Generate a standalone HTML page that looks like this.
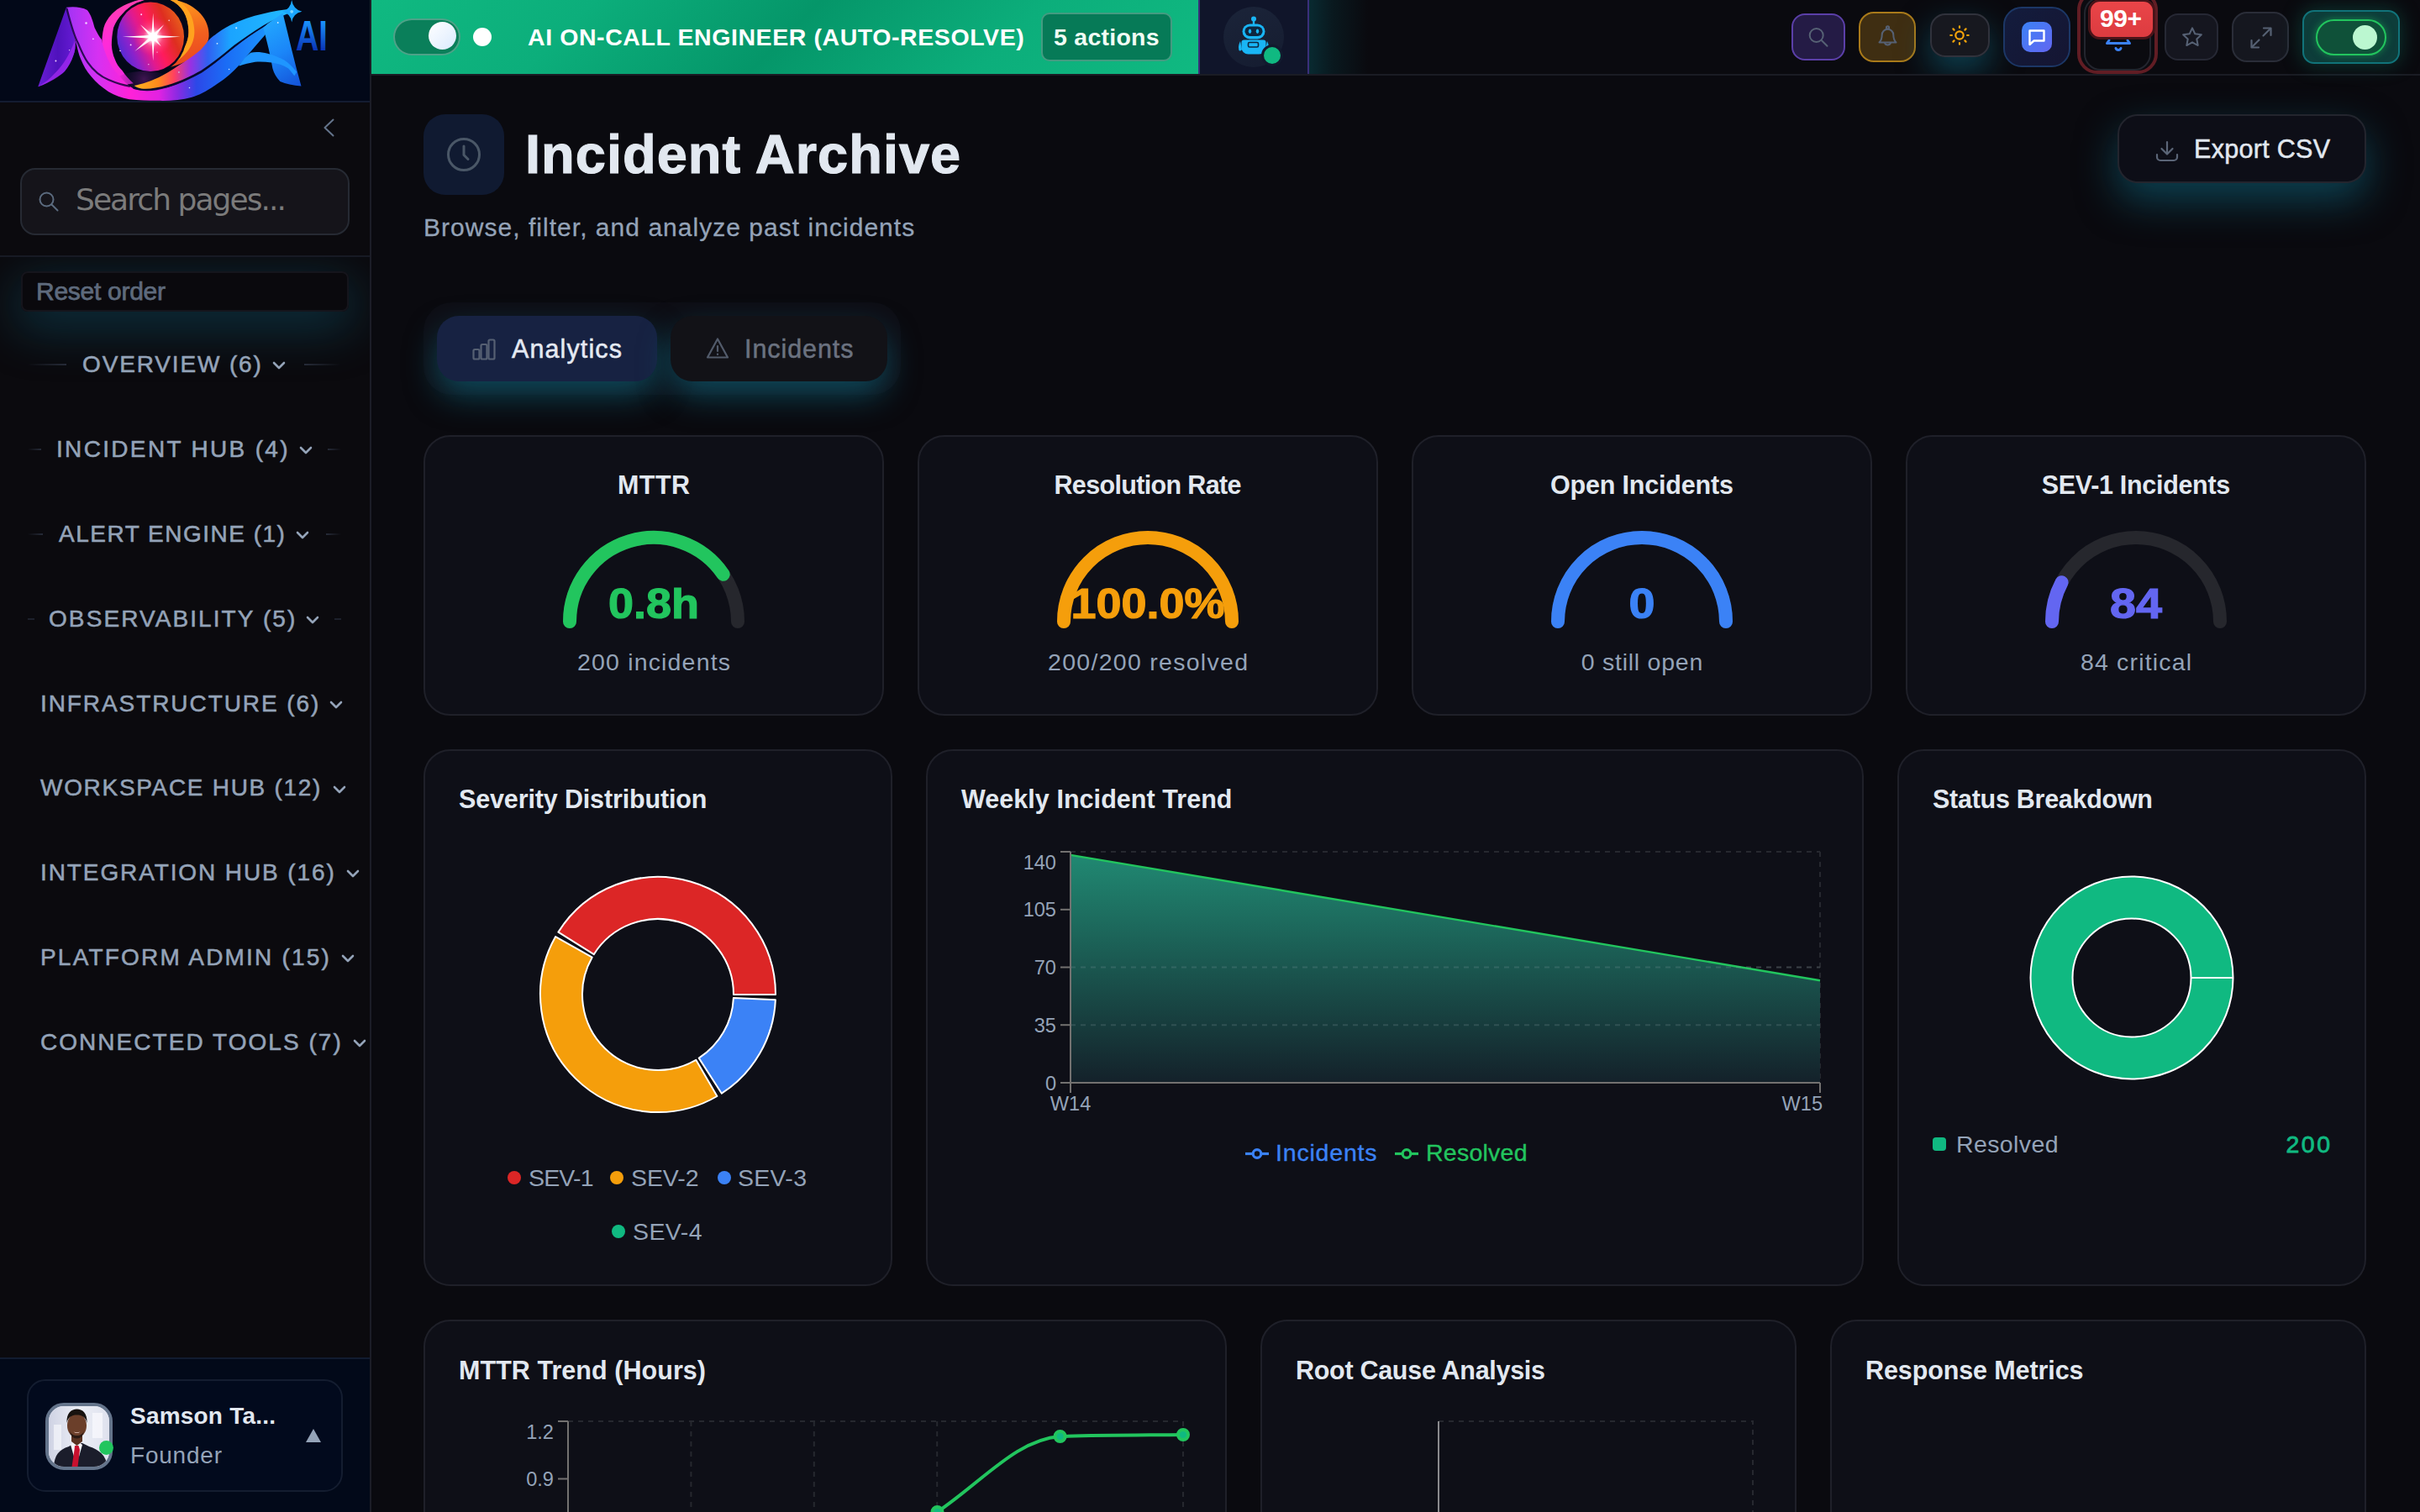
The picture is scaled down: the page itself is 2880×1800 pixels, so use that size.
<!DOCTYPE html>
<html lang="en">
<head>
<meta charset="utf-8">
<title>Incident Archive</title>
<style>
*{box-sizing:border-box;margin:0;padding:0}
html,body{width:2880px;height:1800px;overflow:hidden;background:#0a0a0f}
body{font-family:"Liberation Sans",sans-serif;color:#e2e8f0;position:relative}
.abs{position:absolute}
.t{position:absolute;white-space:nowrap;line-height:1}
svg{display:block;overflow:visible}
/* sidebar */
#sidebar{position:absolute;left:0;top:0;width:442px;height:1800px;background:#0b0a0e;border-right:2px solid #1c1d27}
#logo{position:absolute;left:0;top:0;width:440px;height:122px;background:#020818;border-bottom:2px solid #141c31;overflow:hidden}
#search{position:absolute;left:24px;top:200px;width:392px;height:80px;border:2px solid #262a33;border-radius:18px;background:#15141a}
#sep1{position:absolute;left:0;top:304px;width:440px;height:2px;background:#171a24}
#navglow{position:absolute;left:0;top:306px;width:440px;height:220px;overflow:hidden}
#navglow i{position:absolute;left:25px;top:17px;width:390px;height:48px;border-radius:8px;box-shadow:0 16px 56px 6px rgba(14,100,128,.4)}
#reset{position:absolute;left:25px;top:323px;width:390px;height:48px;border:2px solid #15151c;border-radius:8px;background:#0a090d}
.nav{position:absolute;left:0;width:440px;height:40px}
.nav .t{font-size:28px;font-weight:400;color:#94a3b8;-webkit-text-stroke:.55px #94a3b8;letter-spacing:2.9px;top:6px}
.nav .hr{position:absolute;top:19px;height:2px}
#userwrap{position:absolute;left:0;top:1616px;width:440px;height:184px;background:#020919;border-top:2px solid #121c30}
#usercard{position:absolute;left:32px;top:24px;width:376px;height:134px;border:2px solid #141d30;border-radius:22px;background:#020a1d}
/* topbar */
#topbar{position:absolute;left:442px;top:0;width:2438px;height:90px;border-bottom:2px solid #1a1c24;background:#0a0a0f}
#banner{position:absolute;left:0;top:0;width:984px;height:88px;background:linear-gradient(135deg,#10b981 0%,#0cae7b 25%,#059669 50%,#0cae7b 75%,#10b981 100%)}
#robot{position:absolute;left:984px;top:0;width:132px;height:88px;background:#10152a;border-left:2px solid #3a2f7a;border-right:2px solid #3a2f7a}
.ib{position:absolute;border-style:solid;border-width:2px}
/* main */
.card{position:absolute;background:#0e0f17;border:2px solid #1f2029;border-radius:32px}
.ct{font-size:30px;font-weight:700;color:#e2e8f0}
.sub{font-size:28px;color:#94a3b8}
.ax{font-size:23.600px;fill:#94a3b8;font-family:"Liberation Sans",sans-serif}
</style>
</head>
<body>
<aside id="sidebar">
  <div id="logo"><svg class="abs" style="left:30px;top:0" width="380" height="125" viewBox="0 0 2420 796">
<defs>
<linearGradient id="lgN" x1="95" y1="0" x2="400" y2="0" gradientUnits="userSpaceOnUse"><stop offset="0" stop-color="#6a1ed6"/><stop offset=".5" stop-color="#4f12bc"/><stop offset="1" stop-color="#6a1cd8"/></linearGradient>
<linearGradient id="lgA1" x1="315" y1="0" x2="1900" y2="0" gradientUnits="userSpaceOnUse"><stop offset="0" stop-color="#a233f5"/><stop offset=".15" stop-color="#d631f2"/><stop offset=".3" stop-color="#ff22d8"/><stop offset=".44" stop-color="#e222e2"/><stop offset=".53" stop-color="#8a2ae2"/><stop offset=".62" stop-color="#2c48e8"/><stop offset=".76" stop-color="#1b6cf5"/><stop offset="1" stop-color="#1b9cff"/></linearGradient>
<linearGradient id="lgB" x1="826" y1="0" x2="2040" y2="0" gradientUnits="userSpaceOnUse"><stop offset="0" stop-color="#ffb422"/><stop offset=".15" stop-color="#ff8a1c"/><stop offset=".25" stop-color="#ff4060"/><stop offset=".35" stop-color="#9a30e2"/><stop offset=".46" stop-color="#3060f2"/><stop offset=".6" stop-color="#1ba4ff"/><stop offset="1" stop-color="#22bbff"/></linearGradient>
<linearGradient id="lgAr" x1="1800" y1="150" x2="2090" y2="650" gradientUnits="userSpaceOnUse"><stop offset="0" stop-color="#22aaff"/><stop offset=".5" stop-color="#1b86f8"/><stop offset="1" stop-color="#1452d8"/></linearGradient>
<linearGradient id="lgAI" x1="0" y1="155" x2="0" y2="385" gradientUnits="userSpaceOnUse"><stop offset="0" stop-color="#1b96ff"/><stop offset="1" stop-color="#0a32b4"/></linearGradient>
<linearGradient id="lgRing" x1="0" y1="0" x2="0" y2="650" gradientUnits="userSpaceOnUse"><stop offset="0" stop-color="#ff3fae"/><stop offset=".5" stop-color="#ff2bd8"/><stop offset="1" stop-color="#f02be0"/></linearGradient>
<linearGradient id="lgOr" x1="1150" y1="0" x2="1200" y2="520" gradientUnits="userSpaceOnUse"><stop offset="0" stop-color="#ff9a1c"/><stop offset=".5" stop-color="#f2601f"/><stop offset="1" stop-color="#e8451f"/></linearGradient>
<linearGradient id="lgOrb" x1="700" y1="440" x2="1210" y2="210" gradientUnits="userSpaceOnUse"><stop offset="0" stop-color="#3f2fd8"/><stop offset=".22" stop-color="#8a22cc"/><stop offset=".42" stop-color="#e01a90"/><stop offset=".58" stop-color="#ff1b5c"/><stop offset=".8" stop-color="#de2e20"/><stop offset="1" stop-color="#e8601c"/></linearGradient>
<radialGradient id="rgGlow" cx="969" cy="279" r="150" gradientUnits="userSpaceOnUse"><stop offset="0" stop-color="#fff"/><stop offset=".22" stop-color="#ffe9f0" stop-opacity=".95"/><stop offset=".5" stop-color="#ff6aa0" stop-opacity=".55"/><stop offset="1" stop-color="#ff2a70" stop-opacity="0"/></radialGradient>
<radialGradient id="rgDk" cx="900" cy="600" r="200" gradientUnits="userSpaceOnUse"><stop offset="0" stop-color="#5a1a6a" stop-opacity=".7"/><stop offset="1" stop-color="#1a0a3a" stop-opacity="0"/></radialGradient>
</defs>
<!-- left ring (magenta) -->
<path d="M860 0 C780 20 700 60 658 105 C625 140 605 175 595 210 C585 255 580 300 582 342 C585 380 590 415 600 447 C612 490 632 525 658 553 C690 590 725 620 763 642 L821 632 C790 605 760 575 737 537 C710 510 690 480 679 447 C665 415 657 380 655 342 C655 300 660 255 669 210 C685 170 705 135 737 105 C780 60 830 30 905 0 Z" fill="url(#lgRing)"/>
<!-- orange right crescent -->
<path d="M1140 0 C1300 35 1400 150 1392 275 C1384 385 1255 475 1028 528 C1170 450 1245 340 1238 225 C1232 115 1190 45 1100 0 Z" fill="url(#lgOr)"/>
<path d="M1100 0 C1190 45 1232 115 1238 225 C1245 340 1170 450 1028 528 C1215 455 1290 340 1282 225 C1275 120 1230 45 1150 0 Z" fill="#ffa21e"/>
<!-- orb -->
<ellipse cx="950" cy="279" rx="270" ry="279" fill="#07061c"/><ellipse cx="950" cy="279" rx="254" ry="263" fill="url(#lgOrb)"/>
<circle cx="969" cy="279" r="150" fill="url(#rgGlow)"/>
<g fill="#fff"><path d="M737 279 L969 266 L1176 279 L969 292 Z"/><path d="M969 100 L980 279 L969 460 L958 279 Z"/><path d="M872 186 L978 270 L1030 352 L958 290 Z" opacity=".9"/><path d="M1052 186 L978 290 L830 388 L958 268 Z" opacity=".9"/><circle cx="969" cy="279" r="34"/></g>
<g fill="#ffd9ff"><circle cx="880" cy="110" r="6"/><circle cx="1090" cy="155" r="5"/><circle cx="800" cy="340" r="6"/><circle cx="720" cy="385" r="5"/><circle cx="1000" cy="395" r="4"/><circle cx="935" cy="488" r="4"/></g>
<ellipse cx="900" cy="610" rx="210" ry="70" fill="url(#rgDk)"/>
<!-- N left leg -->
<path d="M97 658 L311 58 L318 70 C345 150 368 240 379 316 C382 355 378 390 365 420 C350 465 328 505 300 540 C280 560 260 572 237 585 C195 615 150 640 97 658 Z" fill="url(#lgN)"/>
<path d="M379 316 C382 355 378 390 365 420 C350 465 328 505 300 540 C265 575 190 625 97 658 C150 625 190 595 215 565 C275 510 320 440 350 370 C362 345 370 325 375 305 Z" fill="#a62af2" opacity=".75"/>
<!-- band 1: N diagonal + bottom swoosh + A left leg -->
<path d="M312 56 C360 48 430 52 470 76 C500 110 515 170 526 210 C545 250 560 275 579 300 C600 400 640 500 700 560 C740 610 780 650 826 675 C900 690 1000 680 1079 662 C1180 630 1260 590 1332 552 C1430 490 1510 420 1584 360 C1660 300 1730 250 1805 205 L1900 130 L1955 100 L1880 190 C1790 300 1700 400 1622 494 C1570 550 1520 595 1458 633 C1380 690 1320 720 1263 737 C1180 760 1090 766 1000 763 C930 762 860 760 790 753 C730 740 680 722 632 695 C580 660 535 625 500 579 C465 540 440 495 421 447 C405 410 398 375 390 342 C360 250 335 150 312 56 Z" fill="url(#lgA1)"/>
<path d="M316 68 C350 200 380 290 400 326 C430 400 450 440 474 474 C520 540 570 580 632 605 C690 630 740 645 790 653" fill="none" stroke="#14043a" stroke-width="14" stroke-linecap="round" opacity=".85"/>
<!-- dark separator -->
<path d="M826 668 C900 690 1000 680 1079 655 C1180 625 1260 585 1332 545 C1430 480 1510 410 1584 350 C1660 290 1730 240 1805 195 L2030 88" fill="none" stroke="#050a30" stroke-width="16" stroke-linecap="round" opacity=".9"/>
<!-- band 2: orange -> blue upper -->
<path d="M826 650 C880 640 960 615 1041 572 C1100 540 1150 505 1205 470 C1250 440 1290 410 1332 375 C1355 350 1375 325 1395 300 C1445 255 1500 218 1553 191 C1640 150 1720 120 1800 105 C1880 85 1960 72 2040 66 L2044 86 C1960 110 1880 150 1805 192 C1730 237 1660 287 1584 342 C1510 402 1430 472 1332 535 C1260 575 1180 615 1079 645 C1000 668 930 678 880 672 C855 668 838 660 826 650 Z" fill="url(#lgB)"/>
<!-- A right leg + crossbar -->
<path d="M1837 180 L1952 98 C2000 290 2040 470 2092 652 C2030 650 1975 635 1932 618 C1905 590 1885 555 1875 519 C1860 420 1830 310 1805 210 Z" fill="url(#lgAr)"/>
<path d="M1622 494 C1650 450 1680 420 1710 399 C1752 392 1795 396 1837 406 C1885 418 1925 435 1963 456 C2000 480 2030 512 2058 545 L2040 575 C2025 555 2010 535 1995 519 C1955 495 1910 480 1868 475 C1825 468 1782 466 1742 469 C1700 476 1660 486 1622 500 Z" fill="#1f96ff"/>
<!-- sparkle -->
<path d="M2020 0 Q2030 70 2098 88 Q2030 102 2020 168 Q2010 102 1948 88 Q2010 72 2020 0 Z" fill="#1ba6ff"/>
<circle cx="2020" cy="88" r="12" fill="#7fd6ff"/>
<g fill="#cfe9ff"><circle cx="1600" cy="212" r="7"/><circle cx="1455" cy="330" r="6"/><circle cx="1915" cy="172" r="6"/><circle cx="1245" cy="665" r="5"/><circle cx="1545" cy="525" r="5"/><circle cx="1165" cy="548" r="5"/></g>
<g fill="#f3d2ff"><circle cx="462" cy="175" r="8"/><circle cx="515" cy="295" r="6"/><circle cx="232" cy="462" r="6"/><circle cx="335" cy="380" r="4"/></g>
<text x="2050" y="385" font-family="'Liberation Sans',sans-serif" font-weight="700" font-size="322" textLength="242" lengthAdjust="spacingAndGlyphs" fill="#1466e0" style="fill:url(#lgAI)">AI</text>
</svg></div>
  <svg class="abs" style="left:382px;top:139px" width="20" height="26" viewBox="0 0 20 26"><path d="M14.500 3.500 L4.500 13 L14.500 22.500" fill="none" stroke="#64748b" stroke-width="2" stroke-linecap="round" stroke-linejoin="round"/></svg>
  <div id="search">
    <svg class="abs" style="left:19px;top:24px" width="30" height="30" viewBox="0 0 30 30"><circle cx="10.500" cy="11.500" r="8" fill="none" stroke="#5b6b7f" stroke-width="2"/><path d="M16.500 17.500 L23.500 24.500" stroke="#5b6b7f" stroke-width="2" stroke-linecap="round"/></svg>
    <span class="t" id="t_search" style="left:64px;top:18px;font-size:36px;color:#7b7b7b;font-family:'DejaVu Sans','Liberation Sans',sans-serif;letter-spacing:-1.94px">Search pages...</span>
  </div>
  <div id="sep1"></div>
  <div id="navglow"><i></i></div>
  <div id="reset"><span class="t" id="t_reset" style="left:16px;top:7px;font-size:30px;font-weight:400;-webkit-text-stroke:.75px #5e6a7c;color:#5e6a7c;letter-spacing:-0.28px">Reset order</span></div>
  <nav>
    <div class="nav" style="top:414px"><i class="hr" style="left:33px;width:46px;background:linear-gradient(90deg,rgba(40,46,60,0),#262b38)"></i><span class="t" id="n1" style="left:98px;letter-spacing:1.86px">OVERVIEW (6)</span><i class="hr" style="left:362px;width:43px;background:linear-gradient(270deg,rgba(40,46,60,0),#262b38)"></i></div>
    <div class="nav" style="top:515px"><i class="hr" style="left:33px;width:16px;background:linear-gradient(90deg,rgba(40,46,60,0),#262b38)"></i><span class="t" id="n2" style="left:67px;letter-spacing:2.33px">INCIDENT HUB (4)</span><i class="hr" style="left:390px;width:16px;background:linear-gradient(270deg,rgba(40,46,60,0),#262b38)"></i></div>
    <div class="nav" style="top:616px"><i class="hr" style="left:33px;width:18px;background:linear-gradient(90deg,rgba(40,46,60,0),#262b38)"></i><span class="t" id="n3" style="left:70px;letter-spacing:1.50px">ALERT ENGINE (1)</span><i class="hr" style="left:388px;width:18px;background:linear-gradient(270deg,rgba(40,46,60,0),#262b38)"></i></div>
    <div class="nav" style="top:717px"><i class="hr" style="left:33px;width:8px;background:#1d212c"></i><span class="t" id="n4" style="left:58px;letter-spacing:2.09px">OBSERVABILITY (5)</span><i class="hr" style="left:398px;width:8px;background:#1d212c"></i></div>
    <div class="nav" style="top:818px"><span class="t" id="n5" style="left:48px;letter-spacing:1.92px">INFRASTRUCTURE (6)</span></div>
    <div class="nav" style="top:918px"><span class="t" id="n6" style="left:48px;letter-spacing:1.70px">WORKSPACE HUB (12)</span></div>
    <div class="nav" style="top:1019px"><span class="t" id="n7" style="left:48px;letter-spacing:1.90px">INTEGRATION HUB (16)</span></div>
    <div class="nav" style="top:1120px"><span class="t" id="n8" style="left:48px;letter-spacing:2.19px">PLATFORM ADMIN (15)</span></div>
    <div class="nav" style="top:1221px"><span class="t" id="n9" style="left:48px;letter-spacing:2.04px">CONNECTED TOOLS (7)</span></div>
  </nav>
  <svg class="abs" style="left:0;top:0" width="440" height="1300" viewBox="0 0 440 1300" fill="none" stroke="#94a3b8" stroke-width="2.6" stroke-linecap="round" stroke-linejoin="round">
    <path d="M326 432 l6 6 l6 -6"/><path d="M358 533 l6 6 l6 -6"/><path d="M354 634 l6 6 l6 -6"/><path d="M366 735 l6 6 l6 -6"/><path d="M394 836 l6 6 l6 -6"/><path d="M398 937 l6 6 l6 -6"/><path d="M414 1037 l6 6 l6 -6"/><path d="M408 1138 l6 6 l6 -6"/><path d="M422 1239 l6 6 l6 -6"/>
  </svg>
  <div id="userwrap">
    <div id="usercard">
      <div class="abs" id="avatar" style="left:20px;top:26px;width:80px;height:80px;border:4px solid #64748b;border-radius:22px;overflow:hidden;background:#dfe3ee"><svg width="72" height="72" viewBox="0 0 72 72"><defs><linearGradient id="avbg" x1="0" y1="0" x2="1" y2="0"><stop offset="0" stop-color="#cfd3e4"/><stop offset=".5" stop-color="#eceef6"/><stop offset="1" stop-color="#dfe2ee"/></linearGradient></defs><rect width="72" height="72" fill="url(#avbg)"/><rect x="6" y="22" width="9" height="30" fill="#f5f6fb" opacity=".7"/><rect x="52" y="8" width="12" height="30" fill="#f7f8fc" opacity=".8"/><path d="M6 72 C7 58 12 52 24 48 L30 44 L40 44 L48 48 C60 52 68 58 70 72 Z" fill="#1b1d2b"/><path d="M26 46 L33 40 L40 46 L36 60 L30 60 Z" fill="#f4f4f8"/><path d="M31 47 L35.500 47 L37 52 L34.500 72 L27.500 72 L30.500 52 Z" fill="#c8102e"/><path d="M27 30 h13 v12 l-6.500 5 l-6.500 -5 z" fill="#5a3322"/><ellipse cx="33.500" cy="23" rx="11.500" ry="14.500" fill="#6b3f2a"/><path d="M21.500 20 C21 8 27 3.500 33.500 3.500 C40 3.500 46 8 45.500 20 C44 13 40 10.500 33.500 10.500 C27 10.500 23 13 21.500 20 Z" fill="#17120f"/><path d="M25 29 C27 37 40 37 42 29 C41 35.500 38 38.500 33.500 38.500 C29 38.500 26 35.500 25 29 Z" fill="#2a1a14"/><path d="M29.500 30.500 Q33.500 33.500 37.500 30.500 Q33.500 32 29.500 30.500Z" fill="#e9c9c0"/></svg></div>
      <i class="abs" style="left:84px;top:71px;width:17px;height:17px;border-radius:50%;background:#22c55e"></i>
      <span class="t" id="t_name" style="left:121px;top:28px;font-size:28px;font-weight:700;color:#e2e8f0;letter-spacing:0.21px">Samson Ta...</span>
      <span class="t" id="t_role" style="left:121px;top:75px;font-size:28px;color:#94a3b8;letter-spacing:0.78px">Founder</span>
      <svg class="abs" style="left:329px;top:56px" width="20" height="18" viewBox="0 0 20 18"><path d="M10 1 L19 17 L1 17 Z" fill="#94a3b8"/></svg>
    </div>
  </div>
</aside>
<header id="topbar">
  <div id="banner">
    <div class="abs" style="left:26px;top:22px;width:80px;height:44px;border-radius:22px;background:#0a7f5a;border:2px solid rgba(255,255,255,.28)"></div>
    <i class="abs" style="left:68px;top:26px;width:33px;height:33px;border-radius:50%;background:linear-gradient(135deg,#ffffff,#dbeafe)"></i>
    <i class="abs" style="left:121px;top:33px;width:22px;height:22px;border-radius:50%;background:#fff"></i>
    <span class="t" id="t_banner" style="left:186px;top:30px;font-size:28.5px;font-weight:700;color:#fff;letter-spacing:0.58px">AI ON-CALL ENGINEER (AUTO-RESOLVE)</span>
    <div class="abs" style="left:797px;top:15px;width:156px;height:58px;border-radius:10px;background:#067a57;border:2px solid rgba(255,255,255,.25)"><span class="t" id="t_actions" style="left:13px;top:13px;font-size:28.5px;font-weight:700;color:#f0fdf4;letter-spacing:0.26px">5 actions</span></div>
  </div>
  <div class="abs" style="left:1116px;top:0;width:70px;height:88px;background:linear-gradient(90deg,rgba(8,62,70,.62),rgba(8,58,66,.3) 40%,rgba(8,58,66,0) 100%)"></div>
  <div id="robot">
    <i class="abs" style="left:28px;top:8px;width:72px;height:72px;border-radius:50%;background:linear-gradient(160deg,#1b2439,#151c30)"></i>
    <svg class="abs" style="left:43px;top:19px" width="46" height="48" viewBox="0 0 46 48">
      <g fill="#19b5f5"><circle cx="21" cy="3.5" r="3"/><rect x="19.8" y="4" width="2.4" height="7"/>
      <rect x="7.5" y="9.5" width="27" height="18" rx="9"/>
      <path d="M9.5 28.5 h23 a3 3 0 0 1 3 3 v6 a8 8 0 0 1 -8 8 h-13 a8 8 0 0 1 -8 -8 v-6 a3 3 0 0 1 3 -3z"/>
      <path d="M5 30 q-3 6 -1.500 11 q2.500 1.500 3.500 -1.500 z"/><path d="M37 30 q3 6 1.500 11 q-2.500 1.500 -3.500 -1.500 z"/></g>
      <rect x="10.500" y="12.500" width="21" height="11.500" rx="5.700" fill="#0d2740"/>
      <ellipse cx="16.500" cy="18.200" rx="1.700" ry="2.800" fill="#19b5f5"/><ellipse cx="25.500" cy="18.200" rx="1.700" ry="2.800" fill="#19b5f5"/>
      <rect x="14.500" y="31.500" width="12" height="5.500" rx="1.500" fill="none" stroke="#0d2740" stroke-width="1.600"/>
    </svg>
    <i class="abs" style="left:76px;top:56px;width:20px;height:20px;border-radius:50%;background:#10b981;box-shadow:0 0 0 3px #121a2e"></i>
  </div>
  <!-- right icon buttons (positions relative to topbar left=442) -->
  <div class="ib" style="left:1690px;top:16px;width:64px;height:56px;border-radius:16px;border-color:#5b3fa8;background:#241b45">
    <svg class="abs" style="left:17px;top:13px" width="28" height="28" viewBox="0 0 28 28" fill="none" stroke="#566174" stroke-width="2" stroke-linecap="round"><circle cx="10.700" cy="11" r="8"/><path d="M16.700 17 L23.500 23.800"/></svg>
  </div>
  <div class="ib" style="left:1770px;top:14px;width:68px;height:60px;border-radius:18px;border-color:#a97a1a;background:#3f2e12">
    <svg class="abs" style="left:19px;top:13px" width="28" height="32" viewBox="0 0 28 32" fill="none" stroke="#566174" stroke-width="2" stroke-linecap="round" stroke-linejoin="round"><path d="M3.500 21.500 c2.500 -2.500 3.200 -5 3.200 -9 a6.800 6.800 0 0 1 13.600 0 c0 4 .7 6.500 3.200 9 z"/><path d="M10 22 a3.700 3.700 0 0 0 7 0"/><circle cx="13.500" cy="3.800" r="1.600"/></svg>
  </div>
  <div class="abs" style="left:1700px;top:0;width:400px;height:88px;overflow:hidden"><i class="abs" style="left:155px;top:16px;width:71px;height:52px;border-radius:18px;box-shadow:0 16px 38px 0 rgba(14,112,136,.55)"></i></div>
  <div class="ib" style="left:1855px;top:16px;width:71px;height:52px;border-radius:18px;border-color:#30323c;background:#17181f">
    <svg class="abs" style="left:20px;top:11px" width="26" height="26" viewBox="0 0 26 26" fill="none" stroke="#f5a30b" stroke-width="2.200" stroke-linecap="round"><circle cx="13" cy="13" r="4.700"/><path d="M13 2.300v1.600M13 22.100v1.600M2.300 13h1.600M22.100 13h1.600M5.400 5.400l1.200 1.200M19.400 19.400l1.200 1.200M5.400 20.600l1.200-1.200M19.400 6.600l1.200-1.200"/></svg>
  </div>
  <div class="ib" style="left:1942px;top:8px;width:80px;height:72px;border-radius:22px;border-color:#1c3766;background:linear-gradient(135deg,#131c3d,#151532)">
    <div class="abs" style="left:20px;top:16px;width:36px;height:36px;border-radius:10px;background:linear-gradient(135deg,#3b82f6,#6366f1)">
      <svg class="abs" style="left:7px;top:8px" width="22" height="22" viewBox="0 0 22 22" fill="none" stroke="#fff" stroke-width="2.400" stroke-linejoin="round"><path d="M2.500 2.500 h17 v12 h-12 l-5 4.500 z"/></svg>
    </div>
  </div>
  <div class="abs" style="left:2030px;top:-12px;width:96px;height:100px;border-radius:24px;border:4px solid #611d24;background:#0b0b10"></div>
  <div class="ib" style="left:2038px;top:-4px;width:80px;height:88px;border-radius:20px;border-color:#23252e;background:#0b0b10">
    <svg class="abs" style="left:22px;top:36px" width="34" height="30" viewBox="0 0 34 30" fill="none" stroke="#3b82f6" stroke-width="3" stroke-linecap="round" stroke-linejoin="round"><path d="M6 14 l-2.500 3.500 h27 l-2.500 -3.500"/><path d="M14 23.500 a3.200 3.200 0 0 0 6 0"/></svg>
  </div>
  <div class="abs" style="left:2043px;top:-1px;width:80px;height:48px;border-radius:14px;background:linear-gradient(180deg,#ea4548,#dc3b40);border:3px solid #4a1419"><span class="t" id="t_99" style="left:11px;top:5px;font-size:30px;font-weight:700;color:#fff;letter-spacing:-0.45px">99+</span></div>
  <div class="ib" style="left:2134px;top:16px;width:64px;height:56px;border-radius:16px;border-color:#262834;background:#15161f">
    <svg class="abs" style="left:18px;top:13px" width="26" height="26" viewBox="0 0 28 28" fill="none" stroke="#566174" stroke-width="2.200" stroke-linejoin="round"><path d="M14 2.500 l3.500 7.500 l8.200 1 l-6 5.700 l1.500 8.100 l-7.200 -4 l-7.200 4 l1.500 -8.100 l-6 -5.700 l8.200 -1 z"/></svg>
  </div>
  <div class="ib" style="left:2214px;top:14px;width:68px;height:60px;border-radius:18px;border-color:#2a2d38;background:#15171f">
    <svg class="abs" style="left:19px;top:15px" width="28" height="28" viewBox="0 0 28 28" fill="none" stroke="#566173" stroke-width="2.200" stroke-linecap="round" stroke-linejoin="round"><path d="M17 2.500 h8.500 v8.500"/><path d="M25 3 l-8.500 8.500"/><path d="M11 25.500 h-8.500 v-8.500"/><path d="M3 25 l8.500 -8.500"/></svg>
  </div>
  <div class="ib" style="left:2298px;top:12px;width:116px;height:64px;border-radius:14px;border-color:#11737a;background:#0d3d3a;box-shadow:0 0 24px rgba(16,150,120,.35)">
    <div class="abs" style="left:14px;top:9px;width:84px;height:43px;border-radius:22px;border:2.500px solid #22c55e;background:#0f5139;box-shadow:0 0 10px rgba(34,197,94,.5)"></div>
    <i class="abs" style="left:58px;top:16px;width:29px;height:29px;border-radius:50%;background:#bbf7d0"></i>
  </div>
</header>
<main id="main">
  <div class="abs" style="left:504px;top:136px;width:96px;height:96px;border-radius:26px;background:#101a31">
    <svg class="abs" style="left:26px;top:26px" width="44" height="44" viewBox="0 0 44 44" fill="none" stroke="#4a5767" stroke-width="3" stroke-linecap="round" stroke-linejoin="round"><circle cx="22" cy="22" r="18.500"/><path d="M22 12 v10.500 l5 5"/></svg>
  </div>
  <h1 class="t" id="t_title" style="left:625px;top:151px;font-size:65px;font-weight:700;color:#e2e8f0;-webkit-text-stroke:1.1px #e2e8f0;letter-spacing:1.00px">Incident Archive</h1>
  <p class="t" id="t_subtitle" style="left:504px;top:256px;font-size:30px;color:#94a3b8;-webkit-text-stroke:.3px #94a3b8;letter-spacing:1.03px">Browse, filter, and analyze past incidents</p>
  <div class="abs" id="export" style="left:2520px;top:136px;width:296px;height:82px;border-radius:24px;border:2px solid #23252e;background:#0d0e17;box-shadow:0 20px 48px 0 rgba(14,112,136,.55)">
    <svg class="abs" style="left:43px;top:29px" width="28" height="26" viewBox="0 0 28 26" fill="none" stroke="#5b6577" stroke-width="2.200" stroke-linecap="round" stroke-linejoin="round"><path d="M14 2 v14"/><path d="M7.500 10 l6.500 6.500 l6.500 -6.500"/><path d="M2 17 v3 a4 4 0 0 0 4 4 h16 a4 4 0 0 0 4 -4 v-3"/></svg>
    <span class="t" id="t_export" style="left:89px;top:24px;font-size:30.500px;font-weight:400;color:#e2e8f0;-webkit-text-stroke:.5px #e2e8f0;letter-spacing:0.30px">Export CSV</span>
  </div>
  <div class="abs" id="tabs" style="left:504px;top:360px;width:568px;height:110px;border-radius:34px;background:#0e0e15">
    <div class="abs" style="left:16px;top:16px;width:262px;height:78px;border-radius:26px;background:#172242;box-shadow:0 18px 38px -2px rgba(14,112,136,.6)">
      <svg class="abs" style="left:42px;top:27px" width="28" height="26" viewBox="0 0 28 26" fill="none" stroke="#566073" stroke-width="2.200" stroke-linejoin="round"><rect x="1.500" y="13" width="7" height="11.500" rx="1.500"/><rect x="10.500" y="7" width="7" height="17.500" rx="1.500"/><rect x="19.500" y="1.500" width="7" height="23" rx="1.500"/></svg>
      <span class="t" id="t_tab1" style="left:89px;top:24px;font-size:30.500px;color:#e5eaf3;-webkit-text-stroke:.5px #e5eaf3;letter-spacing:1.11px">Analytics</span>
    </div>
    <div class="abs" style="left:294px;top:16px;width:258px;height:78px;border-radius:26px;background:#121217;box-shadow:0 18px 38px -2px rgba(14,112,136,.6)">
      <svg class="abs" style="left:42px;top:25px" width="28" height="27" viewBox="0 0 28 27" fill="none" stroke="#525b6b" stroke-width="2.200" stroke-linecap="round" stroke-linejoin="round"><path d="M14 2.500 L26 24.500 H2 Z"/><path d="M14 11 v6"/><path d="M14 20.500 v.5"/></svg>
      <span class="t" id="t_tab2" style="left:88px;top:24px;font-size:30.500px;color:#6b7280;-webkit-text-stroke:.5px #6b7280;letter-spacing:0.93px">Incidents</span>
    </div>
  </div>
  <section class="card" style="left:504px;top:518px;width:548px;height:334px">
    <svg class="abs" style="left:-2px;top:-2px" width="548" height="334" viewBox="0 0 548 334">
      <text id="g1t" x="274" y="70" text-anchor="middle" font-size="30.500" font-weight="700" fill="#e2e8f0" textLength="86">MTTR</text>
      <path d="M174.00 222.00 A100 100 0 0 1 374.00 222.00" fill="none" stroke="#26272d" stroke-width="16" stroke-linecap="round"/>
      <path d="M174.00 222.00 A100 100 0 0 1 356.71 165.79" fill="none" stroke="#22c55e" stroke-width="16" stroke-linecap="round"/>
      <text id="g1v" x="274" y="217.500" text-anchor="middle" font-size="49.500" font-weight="700" fill="#22c55e" stroke="#22c55e" stroke-width="1.2" textLength="108" lengthAdjust="spacingAndGlyphs">0.8h</text>
      <text id="g1s" x="274" y="280" text-anchor="middle" font-size="28.500" fill="#94a3b8" textLength="182">200 incidents</text>
    </svg>
  </section>
  <section class="card" style="left:1092px;top:518px;width:548px;height:334px">
    <svg class="abs" style="left:-2px;top:-2px" width="548" height="334" viewBox="0 0 548 334">
      <text id="g2t" x="274" y="70" text-anchor="middle" font-size="30.500" font-weight="700" fill="#e2e8f0" textLength="223">Resolution Rate</text>
      <path d="M174.00 222.00 A100 100 0 0 1 374.00 222.00" fill="none" stroke="#26272d" stroke-width="16" stroke-linecap="round"/>
      <path d="M174.00 222.00 A100 100 0 0 1 374.00 222.00" fill="none" stroke="#f59e0b" stroke-width="16" stroke-linecap="round"/>
      <text id="g2v" x="274" y="217.500" text-anchor="middle" font-size="49.500" font-weight="700" fill="#f59e0b" stroke="#f59e0b" stroke-width="1.2" textLength="183" lengthAdjust="spacingAndGlyphs">100.0%</text>
      <text id="g2s" x="274" y="280" text-anchor="middle" font-size="28.500" fill="#94a3b8" textLength="238">200/200 resolved</text>
    </svg>
  </section>
  <section class="card" style="left:1680px;top:518px;width:548px;height:334px">
    <svg class="abs" style="left:-2px;top:-2px" width="548" height="334" viewBox="0 0 548 334">
      <text id="g3t" x="274" y="70" text-anchor="middle" font-size="30.500" font-weight="700" fill="#e2e8f0" textLength="218">Open Incidents</text>
      <path d="M174.00 222.00 A100 100 0 0 1 374.00 222.00" fill="none" stroke="#26272d" stroke-width="16" stroke-linecap="round"/>
      <path d="M174.00 222.00 A100 100 0 0 1 374.00 222.00" fill="none" stroke="#3b82f6" stroke-width="16" stroke-linecap="round"/>
      <text id="g3v" x="274" y="217.500" text-anchor="middle" font-size="49.500" font-weight="700" fill="#3b82f6" stroke="#3b82f6" stroke-width="1.2" textLength="31" lengthAdjust="spacingAndGlyphs">0</text>
      <text id="g3s" x="274" y="280" text-anchor="middle" font-size="28.500" fill="#94a3b8" textLength="144.5">0 still open</text>
    </svg>
  </section>
  <section class="card" style="left:2268px;top:518px;width:548px;height:334px">
    <svg class="abs" style="left:-2px;top:-2px" width="548" height="334" viewBox="0 0 548 334">
      <text id="g4t" x="274" y="70" text-anchor="middle" font-size="30.500" font-weight="700" fill="#e2e8f0" textLength="224.5">SEV-1 Incidents</text>
      <path d="M174.00 222.00 A100 100 0 0 1 374.00 222.00" fill="none" stroke="#26272d" stroke-width="16" stroke-linecap="round"/>
      <path d="M174.00 222.00 A100 100 0 0 1 185.62 175.21" fill="none" stroke="#6366f1" stroke-width="16" stroke-linecap="round"/>
      <text id="g4v" x="274" y="217.500" text-anchor="middle" font-size="49.500" font-weight="700" fill="#6366f1" stroke="#6366f1" stroke-width="1.2" textLength="62" lengthAdjust="spacingAndGlyphs">84</text>
      <text id="g4s" x="274" y="280" text-anchor="middle" font-size="28.500" fill="#94a3b8" textLength="132">84 critical</text>
    </svg>
  </section>
  <section class="card" style="left:504px;top:892px;width:558px;height:639px">
    <svg class="abs" style="left:-2px;top:-2px" width="558" height="639" viewBox="0 0 558 639">
      <text id="c1t" x="42" y="70" font-size="30.500" font-weight="700" fill="#e2e8f0" textLength="295.5">Severity Distribution</text>
      <path d="M419.00 292.00 A140 140 0 0 0 160.40 217.60 L202.76 244.17 A90 90 0 0 1 369.00 292.00 Z" fill="#dc2626" stroke="#fff" stroke-width="2" stroke-linejoin="round"/><path d="M157.15 223.06 A140 140 0 0 0 349.42 413.00 L324.27 369.78 A90 90 0 0 1 200.67 247.68 Z" fill="#f59e0b" stroke="#fff" stroke-width="2" stroke-linejoin="round"/><path d="M354.84 409.68 A140 140 0 0 0 418.86 298.35 L368.91 296.08 A90 90 0 0 1 327.75 367.65 Z" fill="#3b82f6" stroke="#fff" stroke-width="2" stroke-linejoin="round"/>
      <g font-size="28.500" fill="#94a3b8">
        <circle cx="108" cy="510" r="8" fill="#dc2626"/><text id="l1" x="125" y="520" textLength="77.500">SEV-1</text>
        <circle cx="230" cy="510" r="8" fill="#f59e0b"/><text id="l2" x="247" y="520" textLength="80.500">SEV-2</text>
        <circle cx="358" cy="510" r="8" fill="#3b82f6"/><text id="l3" x="374" y="520" textLength="82">SEV-3</text>
        <circle cx="232" cy="574" r="8" fill="#10b981"/><text id="l4" x="249" y="584" textLength="82.500">SEV-4</text>
      </g>
    </svg>
  </section>
  <section class="card" style="left:1102px;top:892px;width:1116px;height:639px">
    <svg class="abs" style="left:-2px;top:-2px" width="1116" height="639" viewBox="0 0 1116 639">
      <defs><linearGradient id="ga" x1="0" y1="0" x2="0" y2="1"><stop offset="0" stop-color="#22937a" stop-opacity=".92"/><stop offset="1" stop-color="#14222b" stop-opacity=".95"/></linearGradient></defs>
      <text id="c2t" x="42" y="70" font-size="30.500" font-weight="700" fill="#e2e8f0" textLength="322.5">Weekly Incident Trend</text>
      <g stroke="#26282f" stroke-width="2" stroke-dasharray="6 6" fill="none">
        <path d="M172 122 H1064"/><path d="M172 259.5 H1064"/><path d="M172 328.2 H1064"/><path d="M1064 122 V397"/>
      </g>
      <path d="M172 125.9 L1064 275.2 V397 H172 Z" fill="url(#ga)" style="fill:url(#ga)"/>
      <path d="M172 125.9 L1064 275.2" stroke="#22c55e" stroke-width="2.400" fill="none"/>
      <g stroke="#8fa3a8" stroke-opacity=".2" stroke-width="2" stroke-dasharray="6 6" fill="none"><path d="M172 259.5 H1064"/><path d="M172 328.2 H1064"/></g>
      <g stroke="#737170" stroke-width="2" fill="none">
        <path d="M172 122 V397 H1064"/>
        <path d="M160 122 H172"/><path d="M160 190.8 H172"/><path d="M160 259.5 H172"/><path d="M160 328.2 H172"/><path d="M160 397 H172"/>
        <path d="M172 397 v12"/><path d="M1064 397 v12"/>
      </g>
      <g class="ax" text-anchor="end">
        <text x="155" y="143">140</text><text x="155" y="199.2">105</text><text x="155" y="268.0">70</text><text x="155" y="336.8">35</text><text x="155" y="405.5">0</text>
        <text x="172" y="430" text-anchor="middle">W14</text><text x="1067" y="430">W15</text>
      </g>
      <g fill="none" stroke-width="3.200"><path d="M380 481.500 h28" stroke="#3b82f6"/><circle cx="394" cy="481.500" r="4.800" stroke="#3b82f6" fill="#0e0f17"/><path d="M558 481.500 h28" stroke="#22c55e"/><circle cx="572" cy="481.500" r="4.800" stroke="#22c55e" fill="#0e0f17"/></g>
      <text id="lg1" x="416" y="490" font-size="28.500" fill="#3b82f6" stroke="#3b82f6" stroke-width=".4" textLength="120.500">Incidents</text><text id="lg2" x="595" y="490" font-size="28.500" fill="#22c55e" stroke="#22c55e" stroke-width=".4" textLength="120.500">Resolved</text>
    </svg>
  </section>
  <section class="card" style="left:2258px;top:892px;width:558px;height:639px">
    <svg class="abs" style="left:-2px;top:-2px" width="558" height="639" viewBox="0 0 558 639">
      <text id="c3t" x="42" y="70" font-size="30.500" font-weight="700" fill="#e2e8f0" textLength="262">Status Breakdown</text>
      <circle cx="279" cy="272" r="95.500" fill="none" stroke="#10b981" stroke-width="49"/>
      <circle cx="279" cy="272" r="120.500" fill="none" stroke="#fff" stroke-width="2"/><circle cx="279" cy="272" r="70.500" fill="none" stroke="#fff" stroke-width="2"/>
      <path d="M349.500 272 H399.500" stroke="#fff" stroke-width="2"/>
      <rect x="42" y="462" width="16" height="16" rx="4" fill="#10b981"/>
      <text id="st1" x="70" y="480" font-size="28.500" fill="#94a3b8" textLength="121.500">Resolved</text>
      <text id="st2" x="516" y="480" font-size="28.500" text-anchor="end" fill="#10b981" stroke="#10b981" stroke-width=".8" textLength="52.500" dx="-1">200</text>
    </svg>
  </section>
  <section class="card" style="left:504px;top:1571px;width:956px;height:400px">
    <svg class="abs" style="left:-2px;top:-2px" width="956" height="400" viewBox="0 0 956 400">
      <text id="c4t" x="42" y="71" font-size="30.500" font-weight="700" fill="#e2e8f0" textLength="294">MTTR Trend (Hours)</text>
      <g stroke="#26282f" stroke-width="2" stroke-dasharray="6 6" fill="none">
        <path d="M172 121 H904"/><path d="M318.400 121 V400"/><path d="M464.800 121 V400"/><path d="M611.200 121 V400"/><path d="M904 121 V400"/>
      </g>
      <g stroke="#737170" stroke-width="2" fill="none"><path d="M172 121 V400"/><path d="M160 121 H172"/><path d="M160 189.500 H172"/></g>
      <g class="ax" text-anchor="end"><text x="155" y="142">1.2</text><text x="155" y="198">0.9</text></g>
      <path d="M611.500 229 C 668 190, 706 143, 757.600 139 C 800 137.500, 860 137.500, 904 137" fill="none" stroke="#22c55e" stroke-width="4" stroke-linecap="round"/>
      <circle cx="757.600" cy="139" r="6" fill="#10b981" stroke="#22c55e" stroke-width="4"/><circle cx="904" cy="137" r="6" fill="#10b981" stroke="#22c55e" stroke-width="4"/><circle cx="611.500" cy="229" r="6" fill="#10b981" stroke="#22c55e" stroke-width="4"/>
    </svg>
  </section>
  <section class="card" style="left:1500px;top:1571px;width:638px;height:400px">
    <svg class="abs" style="left:-2px;top:-2px" width="638" height="400" viewBox="0 0 638 400">
      <text id="c5t" x="42" y="71" font-size="30.500" font-weight="700" fill="#e2e8f0" textLength="297">Root Cause Analysis</text>
      <g stroke="#26282f" stroke-width="2" stroke-dasharray="6 6" fill="none"><path d="M212 121 H586 V400"/></g>
      <path d="M212 121 V400" stroke="#8a8a8d" stroke-width="2"/>
    </svg>
  </section>
  <section class="card" style="left:2178px;top:1571px;width:638px;height:400px">
    <svg class="abs" style="left:-2px;top:-2px" width="638" height="400" viewBox="0 0 638 400">
      <text id="c6t" x="42" y="71" font-size="30.500" font-weight="700" fill="#e2e8f0" textLength="259.500">Response Metrics</text>
    </svg>
  </section>
</main>
<script>(function(){var w=window.innerWidth||2880;if(Math.abs(w-2880)>2){var k=w/2880,b=document.body;b.style.transformOrigin="0 0";b.style.transform="scale("+k+")";}})();</script>
</body>
</html>
